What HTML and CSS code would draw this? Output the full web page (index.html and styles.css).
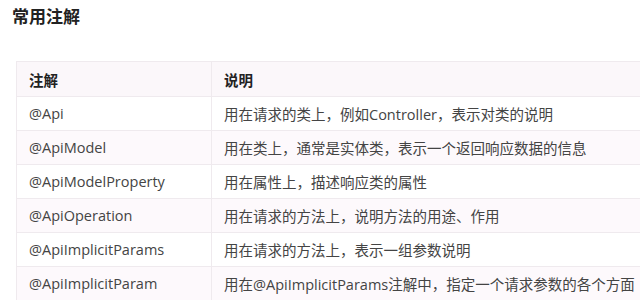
FILE: index.html
```html
<!DOCTYPE html>
<html lang="zh">
<head>
<meta charset="utf-8">
<link rel="stylesheet" href="styles.css">
</head>
<body>
<h2 class="title">常用注解</h2>
<div class="wrap">
<table class="anno">
  <thead>
    <tr><th class="c1">注解</th><th>说明</th></tr>
  </thead>
  <tbody>
    <tr><td>@Api</td><td>用在请求的类上，例如Controller，表示对类的说明</td></tr>
    <tr><td>@ApiModel</td><td>用在类上，通常是实体类，表示一个返回响应数据的信息</td></tr>
    <tr><td>@ApiModelProperty</td><td>用在属性上，描述响应类的属性</td></tr>
    <tr><td>@ApiOperation</td><td>用在请求的方法上，说明方法的用途、作用</td></tr>
    <tr><td>@ApiImplicitParams</td><td>用在请求的方法上，表示一组参数说明</td></tr>
    <tr><td>@ApiImplicitParam</td><td>用在@ApiImplicitParams注解中，指定一个请求参数的各个方面</td></tr>
  </tbody>
</table>
</div>
</body>
</html>
```
FILE: styles.css
```css
html, body {
  margin: 0;
  padding: 0;
  background: #ffffff;
  overflow: hidden;
  width: 640px;
  height: 300px;
}
body {
  font-family: "Open Sans", "Noto Sans CJK SC", sans-serif;
  color: #333333;
}
.title {
  margin: 0;
  padding: 4px 0 0 12px;
  font-size: 17px;
  line-height: 24px;
  font-weight: 700;
  color: #222222;
  font-family: "Noto Sans CJK SC", sans-serif;
}
.wrap {
  margin: 33px 0 0 16px;
  width: 624px;
  overflow: hidden;
}
.anno {
  border-collapse: collapse;
  width: 630px;
  table-layout: fixed;
  font-size: 14.5px;
}
.anno th, .anno td {
  text-align: left;
  padding: 0 0 0 12px;
  border: 1px solid #efeaee;
  white-space: nowrap;
  overflow: hidden;
}
.anno th {
  height: 34px;
  background: #fbf7fa;
  font-weight: 700;
  color: #222222;
  font-family: "Noto Sans CJK SC", sans-serif;
}
.anno .c1 {
  width: 182px;
}
.anno td {
  height: 33px;
  color: #444444;
}
.anno tbody tr:nth-child(odd) td {
  background: #ffffff;
}
.anno tbody tr:nth-child(even) td {
  background: #fdf9fc;
}
```
